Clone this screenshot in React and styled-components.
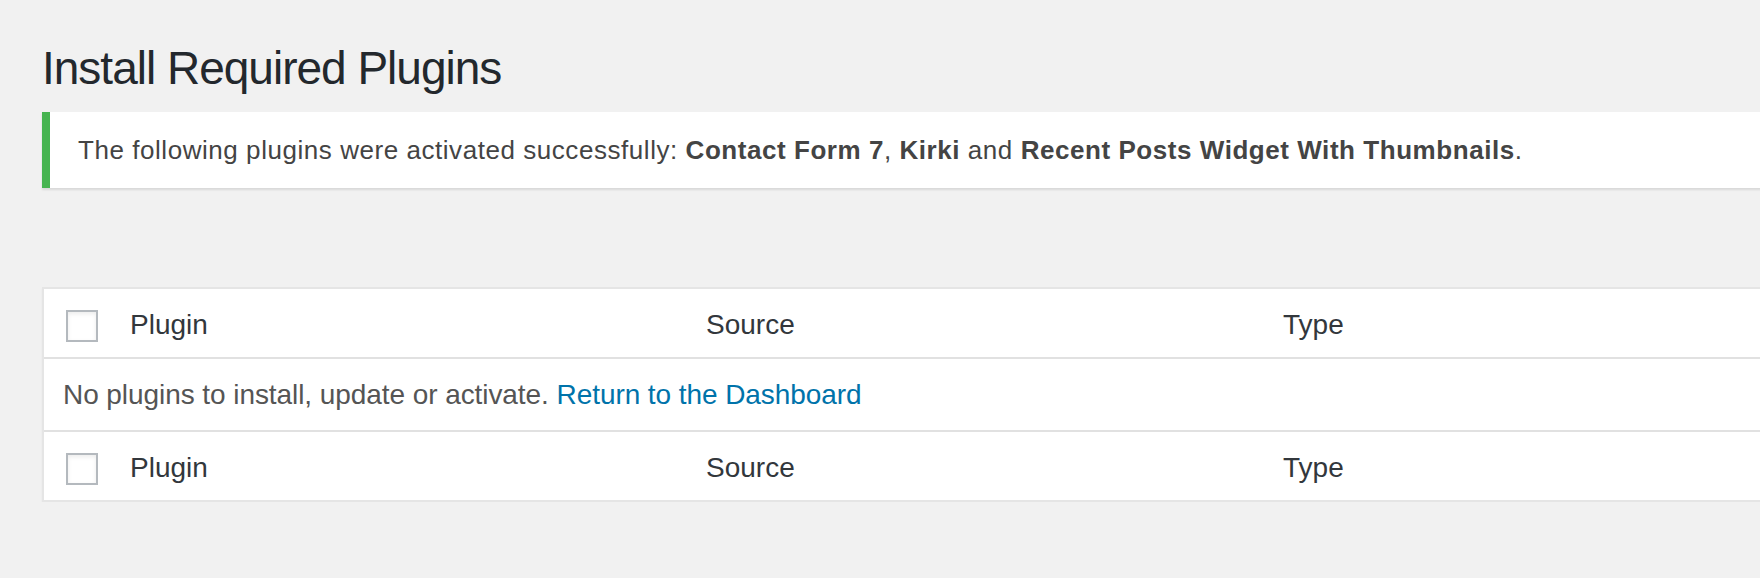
import React from "react";
import styled, { createGlobalStyle } from "styled-components";

//global
const GlobalStyle = createGlobalStyle`
    html, body {
        margin: 0;
        padding: 0;
        background: #f1f1f1;
        overflow: hidden;
    }
    body {
        font-family: "Liberation Sans", Arial, sans-serif;
        color: #444;
    }
`;

//styles
const Wrap = styled.div`
    padding: 38px 0 0 42px;
    width: 1820px;
    box-sizing: border-box;
`;

const PageTitle = styled.h1`
    margin: 0;
    font-size: 46px;
    line-height: 60px;
    font-weight: 400;
    letter-spacing: -1px;
    color: #23282d;
`;

const Notice = styled.div`
    margin-top: 14px;
    padding: 20px 0 20px 28px;
    background: #fff;
    border-left: 8px solid #46b450;
    box-shadow: 0 2px 2px rgba(0, 0, 0, 0.1);
    font-size: 26px;
    line-height: 36px;
    letter-spacing: 0.55px;
    color: #444;

    strong {
        font-weight: 700;
    }
`;

const PluginTable = styled.table`
    margin-top: 99px;
    width: 1802px;
    table-layout: fixed;
    border-collapse: separate;
    border-spacing: 0;
    background: #fff;
    border: 2px solid #e5e5e5;
    box-shadow: 0 2px 2px rgba(0, 0, 0, 0.04);
    font-size: 28px;
    line-height: 40px;
`;

const HeadCell = styled.th`
    height: ${(p) => p.$h}px;
    box-sizing: border-box;
    padding: 16px 0 0 20px;
    vertical-align: top;
    text-align: left;
    font-weight: 400;
    color: #32373c;
    border-bottom: ${(p) => (p.$line ? "2px solid #e1e1e1" : "none")};
`;

const CheckCell = styled.td`
    height: ${(p) => p.$h}px;
    box-sizing: border-box;
    padding: 21px 0 0 22px;
    vertical-align: top;
    border-bottom: ${(p) => (p.$line ? "2px solid #e1e1e1" : "none")};
`;

const Checkbox = styled.input.attrs({ type: "checkbox" })`
    appearance: none;
    display: block;
    margin: 0;
    width: 32px;
    height: 32px;
    box-sizing: border-box;
    border: 2px solid #b4b9be;
    background: #fff;
    box-shadow: inset 0 2px 4px rgba(0, 0, 0, 0.08);
`;

const EmptyCell = styled.td`
    height: 73px;
    box-sizing: border-box;
    padding: 16px 0 0 19px;
    vertical-align: top;
    letter-spacing: -0.07px;
    color: #555;
    border-bottom: 2px solid #e1e1e1;
`;

const DashLink = styled.a`
    color: #0073aa;
    text-decoration: none;
`;

const HeaderRow = ({ line, h }) => (
    <tr>
        <CheckCell $line={line} $h={h}>
            <Checkbox aria-label="Select all" />
        </CheckCell>
        <HeadCell $line={line} $h={h}>Plugin</HeadCell>
        <HeadCell $line={line} $h={h}>Source</HeadCell>
        <HeadCell $line={line} $h={h}>Type</HeadCell>
    </tr>
);

//page component
const App = () => {
    return (
        <>
            <GlobalStyle />
            <Wrap>
                <PageTitle>Install Required Plugins</PageTitle>
                <Notice>
                    The following plugins were activated successfully:{" "}
                    <strong>Contact Form 7</strong>, <strong>Kirki</strong> and{" "}
                    <strong>Recent Posts Widget With Thumbnails</strong>.
                </Notice>
                <PluginTable>
                    <colgroup>
                        <col style={{ width: 66 }} />
                        <col style={{ width: 576 }} />
                        <col style={{ width: 577 }} />
                        <col style={{ width: 579 }} />
                    </colgroup>
                    <thead>
                        <HeaderRow line h={70} />
                    </thead>
                    <tbody>
                        <tr>
                            <EmptyCell colSpan={4}>
                                No plugins to install, update or activate.{" "}
                                <DashLink href="#">Return to the Dashboard</DashLink>
                            </EmptyCell>
                        </tr>
                    </tbody>
                    <tfoot>
                        <HeaderRow h={68} />
                    </tfoot>
                </PluginTable>
            </Wrap>
        </>
    );
};

export default App;
